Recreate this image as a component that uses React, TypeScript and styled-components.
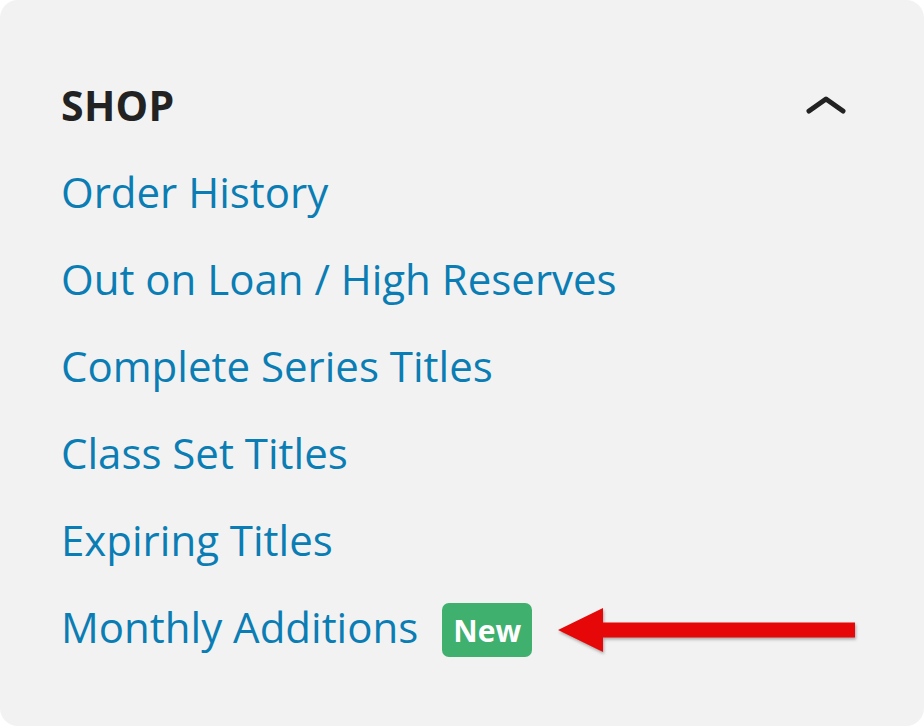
import React from 'react';
import styled, { createGlobalStyle } from 'styled-components';

const GlobalStyle = createGlobalStyle`
  html, body {
    margin: 0;
    padding: 0;
    background: #ffffff;
  }
  body {
    font-family: 'Open Sans', 'Liberation Sans', sans-serif;
  }
`;

const Panel = styled.nav`
  box-sizing: border-box;
  width: 924px;
  height: 726px;
  background: #f2f2f2;
  border-radius: 18px;
  padding: 61px 0 0 61px;
`;

const Header = styled.div`
  display: flex;
  align-items: center;
  justify-content: space-between;
  height: 87px;
  padding-right: 76px;
`;

const Title = styled.h2`
  margin: 0;
  font-size: 41px;
  font-weight: 700;
  color: #222222;
  letter-spacing: 0.3px;
`;

const Toggle = styled.button`
  display: flex;
  align-items: center;
  justify-content: center;
  padding: 0;
  border: none;
  background: none;
  cursor: pointer;
`;

const List = styled.ul`
  list-style: none;
  margin: 0;
  padding: 0;
`;

const Item = styled.li`
  display: flex;
  align-items: center;
  height: 87px;
`;

const ItemLink = styled.a`
  flex-shrink: 0;
  white-space: nowrap;
  font-size: 42px;
  line-height: 87px;
  color: #0a7db4;
  text-decoration: none;
`;

const Badge = styled.span`
  flex-shrink: 0;
  display: inline-flex;
  align-items: center;
  justify-content: center;
  box-sizing: border-box;
  width: 90px;
  height: 54px;
  margin: 7px 0 0 24px;
  border-radius: 7px;
  background: #40b06f;
  color: #ffffff;
  font-size: 30px;
  font-weight: 700;
`;

const Pointer = styled.svg`
  flex-shrink: 0;
  margin: 7px 0 0 26px;
  overflow: visible;
  filter: drop-shadow(1px 2px 1.5px rgba(0, 0, 0, 0.3));
`;

const links = [
  'Order History',
  'Out on Loan / High Reserves',
  'Complete Series Titles',
  'Class Set Titles',
  'Expiring Titles',
];

export default function App() {
  return (
    <>
      <GlobalStyle />
      <Panel>
        <Header>
          <Title>SHOP</Title>
          <Toggle aria-label="Collapse">
            <svg width="44" height="22" viewBox="0 0 44 22">
              <path
                d="M5 17 L22 5 L39 17"
                fill="none"
                stroke="#222222"
                strokeWidth="5"
                strokeLinecap="round"
                strokeLinejoin="round"
              />
            </svg>
          </Toggle>
        </Header>
        <List>
          {links.map(label => (
            <Item key={label}>
              <ItemLink href="#">{label}</ItemLink>
            </Item>
          ))}
          <Item>
            <ItemLink href="#">Monthly Additions</ItemLink>
            <Badge>New</Badge>
            <Pointer width="298" height="44" viewBox="0 0 298 44">
              <path d="M0 22 L45 0 L45 14.5 L297 14.5 L297 29.5 L45 29.5 L45 44 Z" fill="#e60808" />
            </Pointer>
          </Item>
        </List>
      </Panel>
    </>
  );
}
